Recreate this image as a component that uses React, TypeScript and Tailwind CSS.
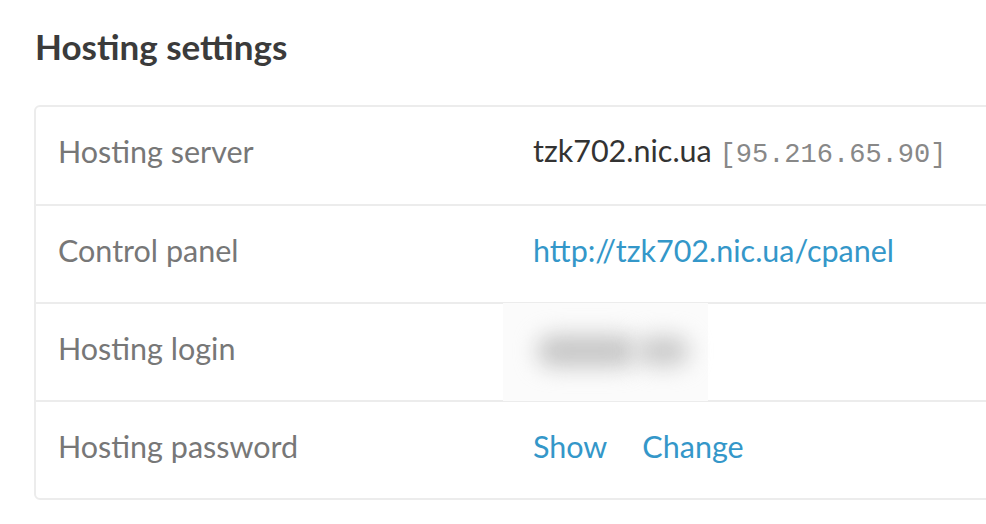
const rows = [
  { label: "Hosting server", kind: "server" },
  { label: "Control panel", kind: "link" },
  { label: "Hosting login", kind: "login" },
  { label: "Hosting password", kind: "password" },
];

function Value({ kind }: { kind: string }) {
  if (kind === "server") {
    return (
      <span className="text-[#333]">
        tzk702.nic.ua{" "}
        <span className="font-['Liberation_Mono',monospace] text-[27px] text-[#888]">[95.216.65.90]</span>
      </span>
    );
  }
  if (kind === "link") {
    return <a className="text-[#3497c9]">http://tzk702.nic.ua/cpanel</a>;
  }
  if (kind === "login") {
    // blurred-out login
    return (
      <div className="-ml-[30px] -mb-[7px] flex h-[98px] w-[205px] items-center bg-[#fbfbfb] pl-[34px] pb-[2px]">
        <div className="h-[32px] w-[100px] rounded-full bg-[#c6c6c6] blur-[11px]" />
        <div className="h-[30px] w-[52px] rounded-full bg-[#cacaca] blur-[11px]" />
      </div>
    );
  }
  return (
    <div className="flex gap-[35px] text-[#3497c9]">
      <a>Show</a>
      <a>Change</a>
    </div>
  );
}

export default function App() {
  return (
    <div className="h-[524px] w-[986px] overflow-hidden bg-white pl-[34px] pt-[24px] font-['Lato',sans-serif]">
      <h2 className="ml-px text-[35px] font-bold leading-[44px] text-[#3b3b3b]">Hosting settings</h2>
      <div className="mt-[37px] w-[1000px] rounded-[6px] border-2 border-[#ececec]">
        {rows.map((r, i) => (
          <div
            key={r.label}
            className={`flex items-center pb-[7px] text-[30.5px] ${i > 0 ? "h-[98px] border-t-2 border-[#ececec]" : "h-[97px]"}`}
          >
            <div className="w-[497px] pl-[22px] text-[#777]">{r.label}</div>
            <Value kind={r.kind} />
          </div>
        ))}
      </div>
    </div>
  );
}
